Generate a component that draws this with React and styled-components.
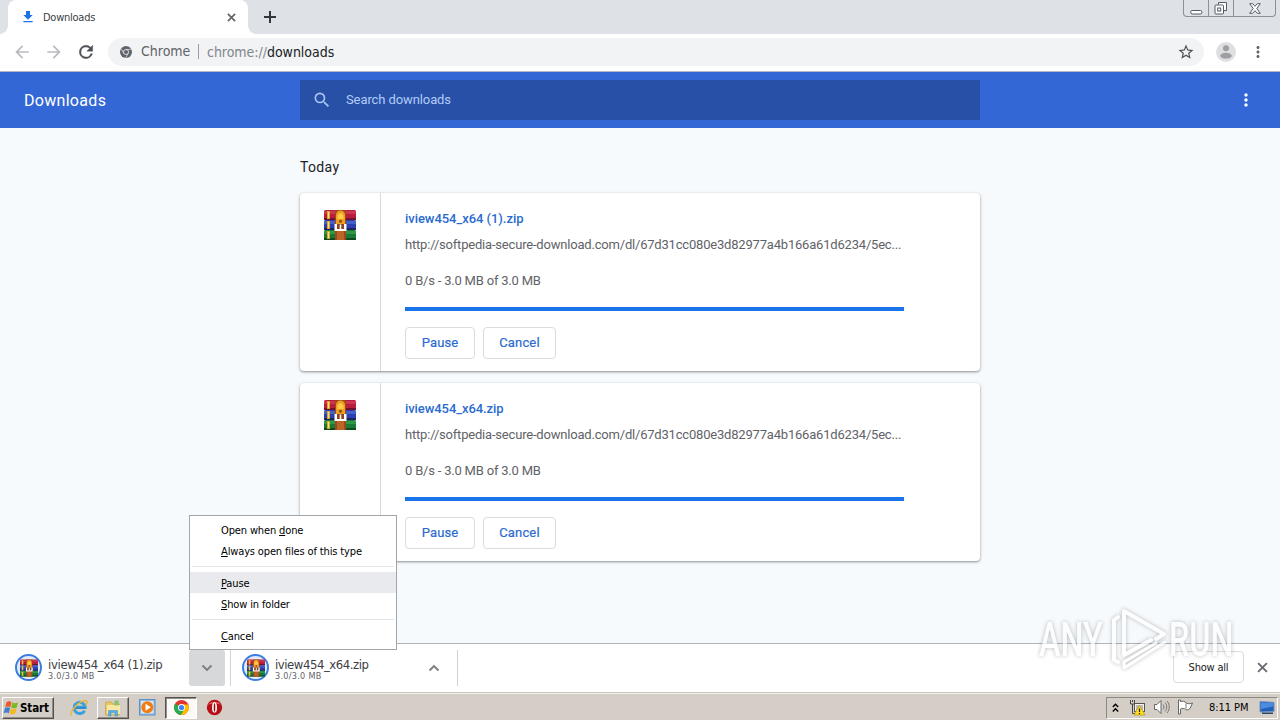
import React from "react";
import styled, { createGlobalStyle, css } from "styled-components";
import {
  MdArrowBack,
  MdArrowForward,
  MdFileDownload,
  MdMoreVert,
  MdSearch,
  MdStarBorder
} from "react-icons/md";

const URL_TEXT = "http://softpedia-secure-download.com/dl/67d31cc080e3d82977a4b166a61d6234/5ec...";

const downloads = [
  { id: 1, name: "iview454_x64 (1).zip", spacing: "-0.05px", shelfSpacing: "-0.33px" },
  { id: 2, name: "iview454_x64.zip", spacing: "-0.08px", shelfSpacing: "-0.45px" }
];

// WinRAR stack of books with the belt and buckle
const RarIcon = ({ size = 32 }) => (
  <svg width={size} height={size} viewBox="0 0 32 32">
    <rect x="0" y="1" width="32" height="10" rx="1.5" fill="#b81d3c" />
    <rect x="0" y="2" width="32" height="3" fill="#cf3550" />
    <rect x="0" y="9" width="32" height="2" fill="#6e1230" />
    <rect x="0" y="11" width="32" height="10" rx="1.5" fill="#2b3fae" />
    <rect x="0" y="12" width="32" height="3" fill="#4660c6" />
    <rect x="0" y="19" width="32" height="2" fill="#1c2260" />
    <rect x="0" y="21" width="32" height="10" rx="1.5" fill="#187a36" />
    <rect x="0" y="22" width="32" height="3" fill="#2f9848" />
    <rect x="0" y="29" width="32" height="2" fill="#0d4a20" />
    <path d="M3 2h3v8H3zM3 12h3v8H3zM3 22h3v8H3z" fill="#d9a62c" />
    <path d="M4 3h1v6H4zM4 13h1v6H4zM4 23h1v6H4z" fill="#f6e07a" />
    <rect x="11" y="1" width="11" height="30" fill="#9c4a1c" />
    <rect x="13" y="22" width="7" height="9" fill="#bb6428" />
    <path d="M12 16V6c0-6 9-6 9 0v10z" fill="#f0a020" />
    <path d="M13.5 8c0-5 6-5 6 0v2h-6z" fill="#ffc94a" />
    <circle cx="16.5" cy="12.3" r="1.5" fill="#8b4a12" />
    <path d="M10.5 15H13v5h7v-5h2.5v7h-12z" fill="#fff" />
    <path d="M13 15h7v5h-7z" fill="#8a4420" />
    <path d="M15.700 15.500h1.600v5h-1.600z" fill="#fff" />
  </svg>
);

const ChromeGlyph = ({ mono, size }) => (
  <svg width={size} height={size} viewBox="0 0 24 24">
    <circle cx="12" cy="12" r="12" fill={mono ? "#5f6368" : "#e2352b"} />
    {!mono && <path d="M1.6 6A12 12 0 0 0 11 24l6-9-5-3z" fill="#2da94f" />}
    {!mono && <path d="M12 7h10.9A12 12 0 0 1 11 24l6-10z" fill="#fdbd00" />}
    {mono && <path d="M12 6.8h10.6M7.5 14.6L2.2 5.4M16.5 14.6L11.2 23.8" stroke="#f1f3f4" strokeWidth="1.3" />}
    <circle cx="12" cy="12" r="5.6" fill={mono ? "#f1f3f4" : "#fff"} />
    <circle cx="12" cy="12" r="4.2" fill={mono ? "#5f6368" : "#4285f4"} />
  </svg>
);

const Chevron = ({ up }) => (
  <svg width="12" height="8" viewBox="0 0 12 8">
    <path d={up ? "M1.5 6.5L6 2l4.5 4.5" : "M1.5 1.5L6 6l4.5-4.5"} fill="none" stroke="#7a7e82" strokeWidth="1.9" />
  </svg>
);

const CloseIcon = ({ size, color }) => (
  <svg width={size} height={size} viewBox="0 0 10 10">
    <path d="M1 1l8 8M9 1L1 9" stroke={color} strokeWidth="1.8" />
  </svg>
);

const PlusIcon = () => (
  <svg width="12" height="12" viewBox="0 0 12 12">
    <path d="M0 6h12M6 0v12" stroke="#33363a" strokeWidth="2" />
  </svg>
);

const ReloadIcon = () => (
  <svg width="20" height="20" viewBox="0 0 24 24">
    <path
      d="M17.650 6.350A7.960 7.960 0 0 0 12 4a8 8 0 1 0 7.730 10h-2.080A6 6 0 1 1 12 6c1.660 0 3.140.690 4.220 1.780L13 11h7V4z"
      fill="currentColor"
      stroke="currentColor"
      strokeWidth="0.5"
    />
  </svg>
);

const WindowsFlag = () => (
  <svg width="17" height="16" viewBox="0 0 17 16">
    <path d="M3.5 2.2c2-1.2 3.6-1 5-.1L7.3 7.2c-1.6-.9-3.2-.9-5.1.1z" fill="#ee5a24" />
    <path d="M9.3 2.5c1.8 1 3.5.9 5.7-.3l-1.3 5.2c-2 1.2-3.8 1.1-5.6.2z" fill="#7cb928" />
    <path d="M2 8.1c1.9-1 3.5-1 5.1-.1l-1.3 5.2c-1.6-.9-3.2-.9-5.2.1z" fill="#3f7fd4" />
    <path d="M7.9 8.5c1.8 1 3.5.9 5.6-.2l-1.3 5.2c-2 1.1-3.8 1.1-5.6.2z" fill="#f5b91b" />
  </svg>
);

const ExplorerE = () => (
  <svg width="18" height="18" viewBox="0 0 18 18">
    <path d="M14.6 11.8a5.6 5.6 0 1 1 .7-3.6H6" fill="none" stroke="#3aa0dd" strokeWidth="3" />
    <path d="M4.5 9h11" stroke="#2a8bcf" strokeWidth="1.8" />
    <path d="M1.5 16.5C-.8 13 9 1.600 16 1.600c1.800.5 1 3-.2 4.600" fill="none" stroke="#e8b638" strokeWidth="1.5" />
  </svg>
);

const FolderIcon = () => (
  <svg width="18" height="18" viewBox="0 0 18 18">
    <path d="M1.5 3h6l1 2h7v11h-14z" fill="#e9c661" stroke="#bf9a3c" strokeWidth=".6" />
    <path d="M3 6h13v9H3z" fill="#f9e8a5" />
    <path d="M10.5 1.5h4v5h-4z" fill="#8ac46c" />
    <path d="M4.5 17v-5.5h9V17H11v-3.200H7V17z" fill="#58aee2" stroke="#3c8fc7" strokeWidth=".5" />
  </svg>
);

const PlayerIcon = () => (
  <svg width="17" height="17" viewBox="0 0 17 17">
    <rect x=".5" y=".5" width="15.5" height="15.5" fill="#8fbbe2" stroke="#5f8fc2" />
    <rect x="2" y="2" width="12.5" height="12.5" fill="#d6e8f7" />
    <circle cx="8.3" cy="8.3" r="6" fill="#f07c13" />
    <path d="M6.5 4.800v7l5.300-3.500z" fill="#fff" />
  </svg>
);

const OperaIcon = () => (
  <svg width="17" height="17" viewBox="0 0 17 17">
    <circle cx="8.5" cy="8.5" r="7.7" fill="#b80f16" />
    <path d="M2 6a7 5 0 0 1 13 0c-3-2-9-2-13 0z" fill="#dd5a56" />
    <ellipse cx="8.5" cy="8.5" rx="2.500" ry="5.200" fill="#fff" />
    <ellipse cx="8.5" cy="8.5" rx=".8" ry="4.200" fill="#9d0b12" />
  </svg>
);

const NetworkIcon = () => (
  <svg width="17" height="17" viewBox="0 0 17 17">
    <path d="M1.5 1v4h4V1M3.5 1v2M3.5 5v9.5H6" fill="none" stroke="#444" />
    <rect x="5.5" y="4.5" width="10" height="8" fill="#f3f3f3" stroke="#555" />
    <rect x="7" y="6" width="7" height="5" fill="#bbb" />
    <path d="M10.5 6.5L16 16H5z" fill="#ffdf1b" stroke="#b08c00" strokeWidth=".6" />
    <path d="M10.5 9.5V13M10.5 14v1.200" stroke="#222" strokeWidth="1.2" />
  </svg>
);

const SpeakerIcon = () => (
  <svg width="17" height="16" viewBox="0 0 17 16">
    <path d="M1.5 5.5H4l4-4v13l-4-4H1.5z" fill="#fff" stroke="#666" />
    <path d="M10 5.5c1.3 1.5 1.3 3.5 0 5M12 3.5c2.3 2.5 2.3 6.5 0 9M14 2c3 3.5 3 8.5 0 12" fill="none" stroke="#777" />
  </svg>
);

const FlagIcon = () => (
  <svg width="17" height="16" viewBox="0 0 17 16">
    <path d="M1.5 1v14h2V10c2-1 3.5-.5 5 .2.5 1 3 1 4.5-.7l2.500-5.500c-2 .8-3.500 1-6 .2C7.500 2 5.500 2 3.500 2.500V1z" fill="#fff" stroke="#666" />
    <path d="M9 4.5v5" stroke="#777" />
  </svg>
);

const DesktopIcon = () => (
  <svg width="17" height="15" viewBox="0 0 17 15">
    <path d="M1 1.5l14 .8v9.200l-14 .5z" fill="#1f5fb8" stroke="#7c93b8" />
    <path d="M2 2.5l12 .5v3.500L2 9z" fill="#4a8de0" />
    <path d="M3 12.5h11V14H3z" fill="#29466f" />
  </svg>
);

const WindowButtons = () => (
  <WindowControls>
    <ControlCell $width={24}>
      <svg width="13" height="14" viewBox="0 0 13 14">
        <rect x=".8" y="9.5" width="11" height="3.5" rx="1.3" fill="#fff" stroke="#555b66" />
      </svg>
    </ControlCell>
    <ControlCell $width={25}>
      <svg width="14" height="14" viewBox="0 0 14 14">
        <path d="M4.5 3.5v-2h8v8H10" fill="#fff" stroke="#555b66" />
        <rect x="1" y="4" width="8.5" height="9" rx="1" fill="#fff" stroke="#555b66" />
        <rect x="3.7" y="7" width="3" height="3" fill="none" stroke="#555b66" />
      </svg>
    </ControlCell>
    <ControlCell $width={42}>
      <svg width="12" height="11" viewBox="0 0 12 11">
        <path
          d="M.7.7h3L6 3.3 8.3.7h3L7.8 5.5l3.5 4.800h-3L6 7.700l-2.300 2.600h-3l3.500-4.800z"
          fill="#fff"
          stroke="#555b66"
        />
      </svg>
    </ControlCell>
  </WindowControls>
);

const DownloadCard = ({ name, spacing }) => (
  <Card>
    <IconColumn>
      <RarIcon />
    </IconColumn>
    <CardBody>
      <FileName $spacing={spacing}>{name}</FileName>
      <FileUrl>{URL_TEXT}</FileUrl>
      <Status>0 B/s - 3.0 MB of 3.0 MB</Status>
      <Progress />
      <Actions>
        <ActionButton $width={70}>Pause</ActionButton>
        <ActionButton $width={73}>Cancel</ActionButton>
      </Actions>
    </CardBody>
  </Card>
);

const ShelfItem = ({ name, open, spacing }) => (
  <ShelfCell $first={open}>
    <Ring>
      <RarIcon size={18} />
    </Ring>
    <ShelfText>
      <ShelfName $spacing={spacing}>{name}</ShelfName>
      <ShelfStatus>3.0/3.0 MB</ShelfStatus>
    </ShelfText>
    <ShelfToggle $open={open}>
      <Chevron up={!open} />
    </ShelfToggle>
  </ShelfCell>
);

const ContextMenu = () => (
  <Menu>
    <MenuItem>
      Open when <u>d</u>one
    </MenuItem>
    <MenuItem>
      <u>A</u>lways open files of this type
    </MenuItem>
    <Separator $height={10} $line={4} />
    <MenuItem $active $low>
      <u>P</u>ause
    </MenuItem>
    <MenuItem $low>
      <u>S</u>how in folder
    </MenuItem>
    <Separator $height={11} $line={5} />
    <MenuItem $low>
      <u>C</u>ancel
    </MenuItem>
  </Menu>
);

const Watermark = () => (
  <WatermarkBox>
    <WatermarkWord $width={72} $scale={0.66}>
      ANY
    </WatermarkWord>
    <svg width="58" height="68" viewBox="0 0 58 68">
      <g fill="none" stroke="#fff" strokeWidth="4" strokeLinejoin="round" strokeLinecap="round">
        <path d="M7 11l-4 3v40l4 2" />
        <path d="M45 33l8-5L13 5v44l27-15" />
        <path d="M54 36L13 62v-6l32-19" strokeWidth="3" />
      </g>
    </svg>
    <WatermarkWord $width={64} $scale={0.66}>
      RUN
    </WatermarkWord>
  </WatermarkBox>
);

export default function App() {
  return (
    <Screen>
      <GlobalStyle />
      <TabStrip>
        <Tab>
          <MdFileDownload size={16} color="#1a73e8" />
          <TabTitle>Downloads</TabTitle>
          <CloseIcon size={9} color="#5f6368" />
        </Tab>
        <NewTab>
          <PlusIcon />
        </NewTab>
        <WindowButtons />
      </TabStrip>
      <Toolbar>
        <NavButton $muted>
          <MdArrowBack size={20} />
        </NavButton>
        <NavButton $muted>
          <MdArrowForward size={20} />
        </NavButton>
        <NavButton>
          <ReloadIcon />
        </NavButton>
        <Omnibox>
          <ChromeGlyph mono size={12} />
          <SiteLabel>Chrome</SiteLabel>
          <Address>
            chrome://<b>downloads</b>
          </Address>
          <MdStarBorder size={18} color="#4d5156" />
        </Omnibox>
        <Avatar>
          <svg width="20" height="20" viewBox="0 0 20 20">
            <circle cx="10" cy="10" r="10" fill="#dedfe1" />
            <circle cx="10" cy="6.2" r="3" fill="#9c9ea1" />
            <ellipse cx="10" cy="13.7" rx="5.8" ry="2.9" fill="#9c9ea1" />
          </svg>
        </Avatar>
        <MdMoreVert size={18} color="#5f6368" />
      </Toolbar>
      <PageHeader>
        <PageTitle>Downloads</PageTitle>
        <SearchBox>
          <MdSearch size={20} color="#a9c3f3" />
          <Placeholder>Search downloads</Placeholder>
        </SearchBox>
        <HeaderMenu>
          <MdMoreVert size={20} color="#fff" />
        </HeaderMenu>
      </PageHeader>
      <Page>
        <DateLabel>Today</DateLabel>
        {downloads.map(({ id, name, spacing }) => (
          <DownloadCard key={id} name={name} spacing={spacing} />
        ))}
      </Page>
      <Shelf>
        {downloads.map(({ id, name, shelfSpacing }, index) => (
          <ShelfItem key={id} name={name} open={index === 0} spacing={shelfSpacing} />
        ))}
        <ShelfEnd>
          <ShowAll>Show all</ShowAll>
          <CloseIcon size={11} color="#6b6f73" />
        </ShelfEnd>
      </Shelf>
      <Taskbar>
        <StartButton>
          <WindowsFlag />
          Start
        </StartButton>
        <TaskIcon $width={33} $left={8}>
          <ExplorerE />
        </TaskIcon>
        <TaskButton $left={2}>
          <FolderIcon />
        </TaskButton>
        <TaskIcon $width={36}>
          <PlayerIcon />
        </TaskIcon>
        <TaskButton $pressed>
          <ChromeGlyph size={15} />
        </TaskButton>
        <TaskIcon $width={35}>
          <OperaIcon />
        </TaskIcon>
        <Tray>
          <svg width="7" height="10" viewBox="0 0 7 10">
            <path d="M.8 4l2.700-2.700L6.200 4M.8 8.500l2.700-2.700 2.700 2.700" fill="none" stroke="#000" strokeWidth="1.4" />
          </svg>
          <TrayIcons>
            <NetworkIcon />
            <SpeakerIcon />
            <FlagIcon />
          </TrayIcons>
          <Clock>8:11 PM</Clock>
          <DesktopIcon />
        </Tray>
      </Taskbar>
      <ContextMenu />
      <Watermark />
    </Screen>
  );
}

const GlobalStyle = createGlobalStyle`
  * {
    box-sizing: border-box;
  }

  body {
    margin: 0;
    overflow: hidden;
  }

  svg {
    display: block;
    flex: none;
  }
`;

const systemFont = css`
  font-family: "DejaVu Sans Condensed", "DejaVu Sans", sans-serif;
  font-stretch: condensed;
`;

const Screen = styled.div`
  position: relative;
  display: flex;
  flex-direction: column;
  width: 1280px;
  height: 720px;
  overflow: hidden;
  background: #f7fafc;
  font-family: Roboto, sans-serif;
  white-space: nowrap;
`;

// Browser chrome
const TabStrip = styled.div`
  display: flex;
  height: 34px;
  padding-left: 8px;
  background: #dee1e6;
`;

const Tab = styled.div`
  position: relative;
  display: flex;
  align-items: center;
  width: 240px;
  padding: 0 12px;
  border-radius: 8px 8px 0 0;
  background: #fff;

  /* curved feet on both sides of the tab */
  &::before,
  &::after {
    content: "";
    position: absolute;
    bottom: 0;
    width: 8px;
    height: 8px;
  }

  &::before {
    left: -8px;
    background: radial-gradient(circle at 0 0, transparent 7.5px, #fff 8px);
  }

  &::after {
    right: -8px;
    background: radial-gradient(circle at 100% 0, transparent 7.5px, #fff 8px);
  }
`;

const TabTitle = styled.span`
  ${systemFont}
  flex: 1;
  margin-left: 7px;
  font-size: 11px;
  letter-spacing: -0.25px;
  color: #3c4043;
`;

const NewTab = styled.div`
  display: flex;
  align-items: center;
  margin-left: 16px;
`;

const WindowControls = styled.div`
  display: flex;
  width: 93px;
  height: 17px;
  margin: 0 4px 0 auto;
  border: 1px solid #8b909a;
  border-top: 0;
  border-radius: 0 0 4px 4px;
`;

const ControlCell = styled.div`
  display: flex;
  flex: none;
  align-items: center;
  justify-content: center;
  width: ${props => props.$width}px;
  border-left: 1px solid #8b909a;

  &:first-child {
    border-left: 0;
  }
`;

const Toolbar = styled.div`
  display: flex;
  align-items: center;
  height: 38px;
  padding: 0 13px 2px 6px;
  border-bottom: 1px solid #b5bac4;
  background: #fff;
`;

const NavButton = styled.div`
  display: flex;
  justify-content: center;
  width: 32px;
  color: ${props => (props.$muted ? "#b9bbbe" : "#4d5156")};
`;

const Omnibox = styled.div`
  ${systemFont}
  display: flex;
  align-items: center;
  width: 1096px;
  height: 28px;
  margin-left: 6px;
  padding: 0 9px 0 12px;
  border-radius: 14px;
  background: #f1f3f4;
  font-size: 14px;
  color: #5f6368;
`;

const SiteLabel = styled.span`
  width: 58px;
  margin-left: 9px;
  border-right: 1px solid #9a9da1;
  line-height: 15px;
`;

const Address = styled.span`
  flex: 1;
  margin-left: 8px;
  letter-spacing: -0.03px;
  color: #80868b;

  b {
    font-weight: normal;
    color: #202124;
  }
`;

const Avatar = styled.div`
  margin: 0 13px 0 12px;
`;

// Downloads page
const PageHeader = styled.header`
  display: grid;
  grid-template-columns: 300px 680px 1fr;
  align-items: center;
  height: 56px;
  background: #3367d6;
`;

const PageTitle = styled.h1`
  margin: 0 0 0 24px;
  font-size: 16px;
  font-weight: 400;
  letter-spacing: 0.3px;
  color: #fff;
`;

const SearchBox = styled.div`
  display: flex;
  align-items: center;
  gap: 14px;
  height: 40px;
  padding-left: 12px;
  background: #2850a7;
`;

const Placeholder = styled.span`
  padding-bottom: 2px;
  font-size: 13px;
  letter-spacing: -0.1px;
  color: #b3ccf7;
`;

const HeaderMenu = styled.div`
  display: flex;
  justify-content: flex-end;
  padding-right: 24px;
`;

const Page = styled.main`
  display: flex;
  flex: 1;
  flex-direction: column;
  gap: 12px;
  width: 680px;
  min-height: 0;
  margin: 0 auto;
  padding-top: 29px;
`;

const DateLabel = styled.h2`
  margin: 0 0 3px;
  font-size: 14px;
  font-weight: 400;
  line-height: 21px;
  letter-spacing: 0.35px;
  color: #202124;
`;

const Card = styled.article`
  display: flex;
  flex: none;
  height: 178px;
  border-radius: 4px;
  background: #fff;
  box-shadow: 0 1px 2px rgba(60, 64, 67, 0.45), 0 1px 3px 1px rgba(60, 64, 67, 0.12);
`;

const IconColumn = styled.div`
  width: 81px;
  padding: 16px 0 0 24px;
  border-right: 1px solid #d8dadd;
`;

const CardBody = styled.div`
  padding: 16px 0 0 24px;
  font-size: 13px;
  line-height: 20px;
  color: #5f6368;
`;

const FileName = styled.div`
  font-weight: 500;
  letter-spacing: ${props => props.$spacing};
  color: #2a6bd0;
`;

const FileUrl = styled.div`
  width: 499px;
  margin-top: 6px;
  letter-spacing: -0.195px;
`;

const Status = styled.div`
  margin-top: 16px;
  letter-spacing: -0.2px;
`;

const Progress = styled.div`
  width: 499px;
  height: 4px;
  margin: 16px 0;
  background: #1a73e8;
`;

const Actions = styled.div`
  display: flex;
  gap: 8px;
`;

const ActionButton = styled.button`
  width: ${props => props.$width}px;
  height: 32px;
  padding: 0 0 2px;
  border: 1px solid #dadce0;
  border-radius: 4px;
  background: #fff;
  font: 400 13px Roboto, sans-serif;
  letter-spacing: 0.15px;
  color: #2a6bd0;
  -webkit-text-stroke: 0.2px #2a6bd0;
`;

// Download shelf
const Shelf = styled.footer`
  ${systemFont}
  display: flex;
  height: 50px;
  padding-top: 6px;
  border-top: 1px solid #b2b5b8;
  border-bottom: 1px solid #c8c6c2;
  background: #fff;
`;

const ShelfCell = styled.div`
  display: flex;
  width: ${props => (props.$first ? 231 : 227)}px;
  height: 36px;
  padding: 0 5px 0 ${props => (props.$first ? 15 : 11)}px;
  border-right: 1px solid #d0d2d5;
`;

const Ring = styled.div`
  display: flex;
  flex: none;
  align-items: center;
  justify-content: center;
  width: 27px;
  height: 27px;
  margin-top: 4px;
  border: 2px solid #3b7de0;
  border-radius: 50%;
  background: #e3ebf7;
`;

const ShelfText = styled.div`
  flex: 1;
  margin: 7px 0 0 6px;
`;

const ShelfName = styled.div`
  font-size: 13px;
  line-height: 15px;
  letter-spacing: ${props => props.$spacing};
  color: #3c4043;
`;

const ShelfStatus = styled.div`
  font-size: 9px;
  line-height: 8px;
  letter-spacing: 0.3px;
  color: #5f6368;
`;

const ShelfToggle = styled.div`
  display: flex;
  align-items: center;
  justify-content: center;
  width: 36px;
  border-radius: 3px;
  background: ${props => (props.$open ? "#d6d8da" : "transparent")};
`;

const ShelfEnd = styled.div`
  display: flex;
  align-items: center;
  gap: 13px;
  height: 34px;
  margin-left: auto;
  padding-right: 12px;
`;

const ShowAll = styled.button`
  ${systemFont}
  width: 71px;
  height: 32px;
  border: 1px solid #dadce0;
  border-radius: 4px;
  background: #fff;
  font-size: 11px;
  letter-spacing: -0.2px;
  color: #202124;
`;

// Windows taskbar
const Taskbar = styled.div`
  ${systemFont}
  display: flex;
  align-items: center;
  height: 27px;
  padding: 1px 2px 0;
  border-top: 1px solid #f2f0ec;
  background: #d5cec6;
`;

const StartButton = styled.div`
  display: flex;
  align-items: center;
  width: 52px;
  height: 22px;
  border: 1px solid;
  border-color: #fff #55524e #55524e #fff;
  box-shadow: inset -1px -1px 0 #918d87;
  font-size: 11.5px;
  font-weight: bold;
  letter-spacing: -0.1px;
`;

const TaskIcon = styled.div`
  display: flex;
  justify-content: center;
  width: ${props => props.$width}px;
  margin-left: ${props => props.$left || 0}px;
`;

const TaskButton = styled.div`
  display: flex;
  align-items: center;
  justify-content: center;
  width: 32px;
  height: 22px;
  margin-left: ${props => props.$left || 0}px;
  border: 1px solid;
  border-color: ${props => (props.$pressed ? "#55524e #fff #fff #55524e" : "#fff #55524e #55524e #fff")};
  background: ${props => (props.$pressed ? "#fbfaf9" : "transparent")};
  box-shadow: ${props => (props.$pressed ? "inset 1px 1px 0 #918d87" : "inset -1px -1px 0 #918d87")};
`;

const Tray = styled.div`
  display: flex;
  align-items: center;
  width: 172px;
  height: 22px;
  margin-left: auto;
  padding-left: 5px;
  border: 1px solid;
  border-color: #8d8983 #fff #fff #8d8983;
`;

const TrayIcons = styled.div`
  display: flex;
  gap: 7px;
  margin-left: 10px;
`;

const Clock = styled.span`
  width: 50px;
  margin-left: 15px;
  font-size: 11px;
  letter-spacing: -0.05px;
`;

const Menu = styled.div`
  ${systemFont}
  position: absolute;
  left: 189px;
  top: 515px;
  width: 208px;
  height: 135px;
  padding-top: 4px;
  border: 1px solid #a3a5a8;
  background: #fff;
`;

const MenuItem = styled.div`
  height: 21px;
  padding-left: 31px;
  background: ${props => (props.$active ? "#e8eaed" : "transparent")};
  font-size: 11px;
  line-height: ${props => (props.$low ? 23 : 21)}px;
  letter-spacing: -0.14px;
  color: #000;
`;

const Separator = styled.div`
  height: ${props => props.$height}px;
  margin: 0 2px;
  background: linear-gradient(#e4e5e7, #e4e5e7) 0 ${props => props.$line}px / 100% 1px no-repeat;
`;

const WatermarkBox = styled.div`
  position: absolute;
  left: 1039px;
  top: 606px;
  display: flex;
  align-items: center;
  opacity: 0.7;
  filter: drop-shadow(0 0 2px rgba(90, 95, 100, 0.6));
  pointer-events: none;
`;

const WatermarkWord = styled.span`
  width: ${props => props.$width}px;
  font-family: Roboto, sans-serif;
  font-size: 49px;
  font-weight: 500;
  line-height: 66px;
  transform: scaleX(${props => props.$scale});
  transform-origin: left;
  color: #fff;
`;
